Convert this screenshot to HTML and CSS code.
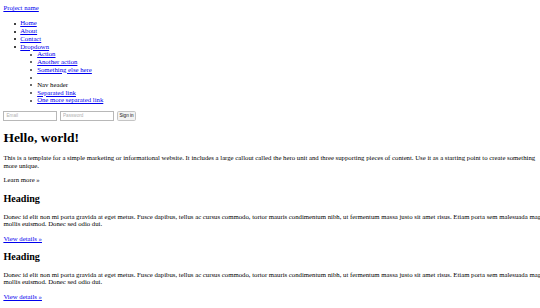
FILE: index.html
```html
<!DOCTYPE html>
<html>
<head>
<meta charset="utf-8">
<title>Jumbotron Template</title>
<link rel="stylesheet" href="styles.css">
</head>
<body>
<div class="page">
  <div class="navbar">
    <a class="brand" href="#">Project name</a>
    <ul class="nav">
      <li><a href="#">Home</a></li>
      <li><a href="#about">About</a></li>
      <li><a href="#contact">Contact</a></li>
      <li><a href="#">Dropdown</a>
        <ul class="dropdown-menu">
          <li><a href="#">Action</a></li>
          <li><a href="#">Another action</a></li>
          <li><a href="#">Something else here</a></li>
          <li class="divider"></li>
          <li class="dropdown-header">Nav header</li>
          <li><a href="#">Separated link</a></li>
          <li><a href="#">One more separated link</a></li>
        </ul>
      </li>
    </ul>
    <form class="navbar-form">
      <input class="field" type="text" placeholder="Email">
      <input class="field" type="password" placeholder="Password">
      <button type="button" class="btn">Sign in</button>
    </form>
  </div>
  <div class="jumbotron">
    <h1>Hello, world!</h1>
    <p class="lead-text">This is a template for a simple marketing or informational website. It includes a large callout called the hero unit and three supporting pieces of content. Use it as a starting point to create something more unique.</p>
    <p>Learn more &raquo;</p>
  </div>
  <div class="row">
    <div class="col">
      <h2>Heading</h2>
      <p>Donec id elit non mi porta gravida at eget metus. Fusce dapibus, tellus ac cursus commodo, tortor mauris condimentum nibh, ut fermentum massa justo sit amet risus. Etiam porta sem malesuada magna mollis euismod. Donec sed odio dui.</p>
      <p><a href="#">View details &raquo;</a></p>
    </div>
    <div class="col">
      <h2>Heading</h2>
      <p>Donec id elit non mi porta gravida at eget metus. Fusce dapibus, tellus ac cursus commodo, tortor mauris condimentum nibh, ut fermentum massa justo sit amet risus. Etiam porta sem malesuada magna mollis euismod. Donec sed odio dui.</p>
      <p><a href="#">View details &raquo;</a></p>
    </div>
  </div>
</div>
</body>
</html>
```

FILE: styles.css
```css
html, body {
  margin: 0;
  padding: 0;
  background: #ffffff;
  overflow: hidden;
}
.page {
  zoom: 0.421875;
  width: 1320px;
  padding: 10px 8px 8px;
  font-family: "Liberation Serif", "Times New Roman", serif;
  font-size: 16px;
  line-height: 18.2px;
  color: #000000;
}
a {
  color: #0000ee;
}
.brand {
  display: block;
}
.nav {
  margin: 18px 0 16px;
  padding-left: 40px;
  list-style: none;
}
.dropdown-menu {
  margin: 0;
  padding-left: 40px;
  list-style: none;
}
.nav li::before {
  content: "";
  display: inline-block;
  box-sizing: border-box;
  width: 5px;
  height: 5px;
  border-radius: 50%;
  background: #000000;
  margin-left: -15.5px;
  margin-right: 10.5px;
  vertical-align: 1px;
}
.dropdown-menu li::before {
  background: transparent;
  border: 1px solid #000000;
  margin-left: -16px;
  margin-right: 11px;
}
.navbar-form {
  margin: 0;
  display: flex;
  align-items: center;
  gap: 6px;
  height: 24px;
}
.field {
  box-sizing: border-box;
  width: 128px;
  height: 24px;
  padding: 2px 5px;
  border: 1px solid #b8b8b8;
  font-size: 11px;
  font-family: "Liberation Sans", Arial, sans-serif;
  background: #ffffff;
}
.field::placeholder {
  color: #b0b0b0;
}
.btn {
  box-sizing: border-box;
  height: 24px;
  width: 44px;
  margin-left: 2px;
  font-size: 11px;
  font-family: "Liberation Sans", Arial, sans-serif;
  color: #111111;
  padding: 0;
  border: 1px solid #c4c4c4;
  border-radius: 4px;
  background: #f3f3f3;
}
.jumbotron h1 {
  font-size: 32px;
  line-height: 36.8px;
  margin: 21.44px 0;
}
.lead-text {
  max-width: 1270px;
}
.col h2 {
  font-size: 24px;
  line-height: 27.6px;
  margin: 19.92px 0;
}
p {
  margin: 16px 0;
}
```
